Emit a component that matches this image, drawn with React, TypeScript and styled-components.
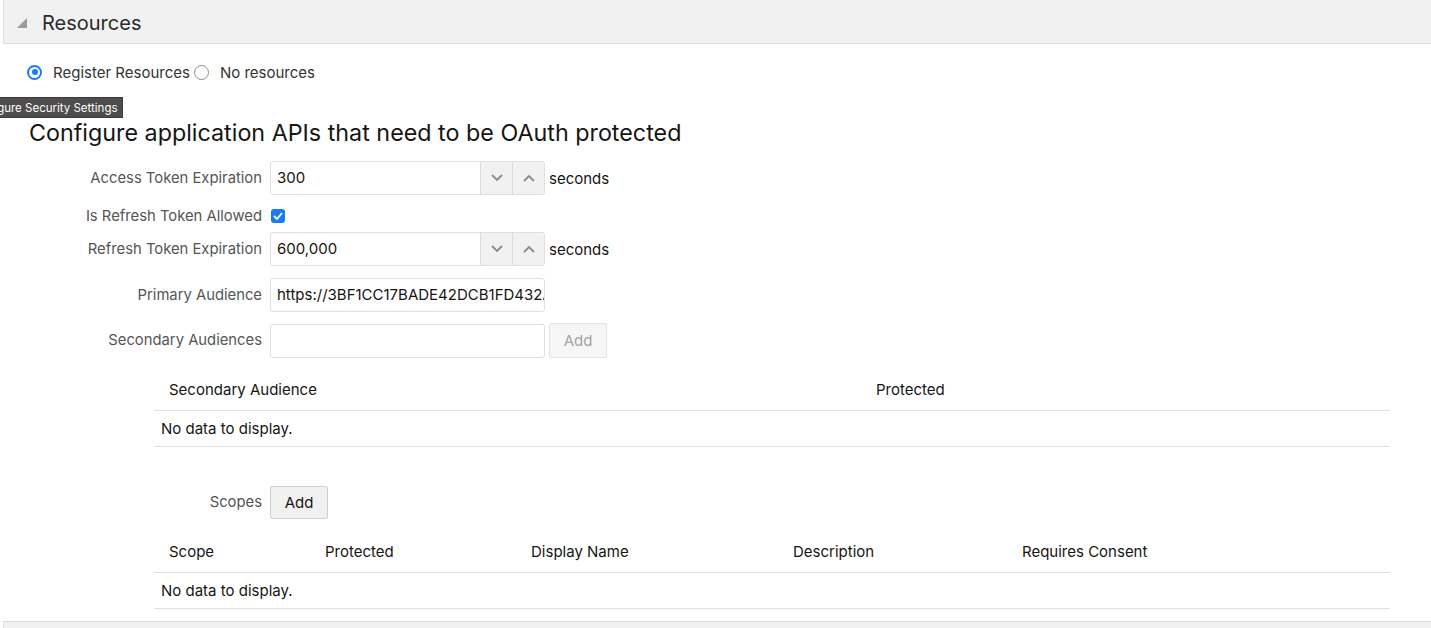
import React from "react";
import styled, { createGlobalStyle } from "styled-components";

const GlobalStyle = createGlobalStyle`
  html, body {
    margin: 0;
    padding: 0;
    background: #fff;
    font-family: Inter, "Liberation Sans", Arial, sans-serif;
    color: #161513;
    overflow: hidden;
  }
`;

const Page = styled.div`
  position: relative;
  width: 1431px;
  height: 628px;
  overflow: hidden;
`;

const SectionBar = styled.div`
  display: flex;
  align-items: center;
  gap: 15px;
  height: 44px;
  margin-left: 3px;
  padding: 3px 0 0 13px;
  background: #f1f1f1;
  border-left: 1px solid #e2e2e2;
  border-bottom: 1px solid #dcdcdc;
  box-sizing: border-box;

  h2 {
    margin: 0;
    font-size: 20px;
    font-weight: 400;
    color: #2b2b2b;
  }
`;

const BottomBar = styled(SectionBar)`
  height: 20px;
  margin-top: 12px;
  border-top: 1px solid #dcdcdc;
  border-bottom: none;
`;

const RadioGroup = styled.div`
  display: flex;
  align-items: center;
  height: 20px;
  margin: 18px 0 0 27px;
  font-size: 15px;
  color: #333;
`;

const RadioOption = styled.label`
  display: flex;
  align-items: center;
  gap: 11px;
  margin-right: 4px;
`;

const RadioDot = styled.span<{ $checked?: boolean }>`
  width: 15px;
  height: 15px;
  box-sizing: border-box;
  border-radius: 50%;
  border: ${(p) => (p.$checked ? "2px solid #1a7cf5" : "1.5px solid #8e8e93")};
  display: flex;
  align-items: center;
  justify-content: center;

  &::after {
    content: "";
    width: 6px;
    height: 6px;
    border-radius: 50%;
    background: ${(p) => (p.$checked ? "#1a7cf5" : "transparent")};
  }
`;

const Tooltip = styled.div`
  position: absolute;
  left: -37px;
  top: 97px;
  height: 19px;
  padding: 0 4px;
  display: flex;
  align-items: center;
  background: #4e4c4d;
  border: 1px solid #3c3c3c;
  color: #fff;
  font-size: 11.5px;
  white-space: nowrap;
`;

const Heading = styled.h1`
  margin: 36px 0 0 29px;
  font-size: 23.3px;
  font-weight: 400;
  line-height: 30px;
  color: #161513;
`;

const Form = styled.div`
  display: flex;
  flex-direction: column;
  margin-top: 13px;
`;

const FieldRow = styled.div<{ $height?: number; $shift?: number }>`
  display: grid;
  grid-template-columns: 262px auto;
  column-gap: 8px;
  align-items: ${(p) => (p.$shift ? "center" : "start")};
  height: ${(p) => p.$height ?? 45}px;
  padding-bottom: ${(p) => p.$shift ?? 0}px;
  box-sizing: border-box;
`;

const Label = styled.label<{ $tight?: boolean }>`
  text-align: right;
  font-size: 14.8px;
  color: #555;
  line-height: ${(p) => (p.$tight ? 20 : 34)}px;
  white-space: nowrap;
`;

const Controls = styled.div`
  display: flex;
  align-items: center;
  gap: 4px;
`;

const InputBox = styled.div`
  display: flex;
  width: 275px;
  height: 34px;
  box-sizing: border-box;
  border: 1px solid #dfdfdf;
  border-radius: 3px;
  overflow: hidden;
  background: #fff;
`;

const InputText = styled.div`
  flex: 1;
  padding-left: 6px;
  font-size: 15px;
  line-height: 32px;
  color: #161513;
  white-space: nowrap;
  overflow: hidden;
`;

const SpinButton = styled.div`
  width: 31px;
  display: flex;
  align-items: center;
  justify-content: center;
  background: #f1f1f1;
  border-left: 1px solid #dcdcdc;
`;

const Unit = styled.span`
  font-size: 15px;
  color: #161513;
`;

const Checkbox = styled.span`
  width: 14px;
  height: 14px;
  margin-left: 1px;
  border-radius: 3px;
  background: #1a7cf5;
  display: flex;
  align-items: center;
  justify-content: center;
`;

const Button = styled.button<{ $disabled?: boolean }>`
  height: ${(p) => (p.$disabled ? 35 : 33)}px;
  width: 58px;
  padding: 0;
  font-family: inherit;
  font-size: 15px;
  border-radius: 2px;
  border: 1px solid ${(p) => (p.$disabled ? "#e3e3e3" : "#cfcfcf")};
  background: ${(p) => (p.$disabled ? "#f6f6f6" : "#f1f1f1")};
  color: ${(p) => (p.$disabled ? "#a3a3a3" : "#161513")};
`;

const Table = styled.div<{ $top: number }>`
  margin: ${(p) => p.$top}px 41px 0 154px;
  font-size: 15px;
  color: #161513;
`;

const TableHead = styled.div<{ $columns: string }>`
  display: grid;
  grid-template-columns: ${(p) => p.$columns};
  align-items: center;
  height: 42px;
  padding-left: 15px;
  border-bottom: 1px solid #e0e0e0;
`;

const EmptyRow = styled.div`
  height: 35px;
  line-height: 35px;
  padding-left: 7px;
  border-bottom: 1px solid #e0e0e0;
`;

const ScopesRow = styled(FieldRow)`
  margin-top: 38px;
  height: auto;
  align-items: center;
`;

const Chevron = ({ up }: { up?: boolean }) => (
  <svg width="12" height="8" viewBox="0 0 12 8">
    <polyline
      points={up ? "1,7 6,2 11,7" : "1,1 6,6 11,1"}
      fill="none"
      stroke="#8a8a8a"
      strokeWidth="1.8"
    />
  </svg>
);

const NumberField = ({ value }: { value: string }) => (
  <Controls>
    <InputBox>
      <InputText>{value}</InputText>
      <SpinButton>
        <Chevron />
      </SpinButton>
      <SpinButton>
        <Chevron up />
      </SpinButton>
    </InputBox>
    <Unit>seconds</Unit>
  </Controls>
);

export default function App() {
  return (
    <Page>
      <GlobalStyle />
      <SectionBar>
        <svg width="10" height="10" viewBox="0 0 10 10">
          <polygon points="10,0 10,10 0,10" fill="#9b9b9b" />
        </svg>
        <h2>Resources</h2>
      </SectionBar>

      <RadioGroup>
        <RadioOption>
          <RadioDot $checked />
          Register Resources
        </RadioOption>
        <RadioOption>
          <RadioDot />
          No resources
        </RadioOption>
      </RadioGroup>

      <Tooltip>Configure Security Settings</Tooltip>

      <Heading>Configure application APIs that need to be OAuth protected</Heading>

      <Form>
        <FieldRow>
          <Label>Access Token Expiration</Label>
          <NumberField value="300" />
        </FieldRow>
        <FieldRow $height={26} $shift={6}>
          <Label $tight>Is Refresh Token Allowed</Label>
          <Checkbox>
            <svg width="10" height="8" viewBox="0 0 10 8">
              <polyline
                points="1,4 4,7 9,1"
                fill="none"
                stroke="#fff"
                strokeWidth="1.8"
              />
            </svg>
          </Checkbox>
        </FieldRow>
        <FieldRow $height={46}>
          <Label>Refresh Token Expiration</Label>
          <NumberField value="600,000" />
        </FieldRow>
        <FieldRow>
          <Label>Primary Audience</Label>
          <Controls>
            <InputBox>
              <InputText>https://3BF1CC17BADE42DCB1FD432A</InputText>
            </InputBox>
          </Controls>
        </FieldRow>
        <FieldRow $height={45}>
          <Label>Secondary Audiences</Label>
          <Controls>
            <InputBox />
            <Button $disabled>Add</Button>
          </Controls>
        </FieldRow>
      </Form>

      <Table $top={0}>
        <TableHead $columns="707px 1fr">
          <span>Secondary Audience</span>
          <span>Protected</span>
        </TableHead>
        <EmptyRow>No data to display.</EmptyRow>
      </Table>

      <ScopesRow>
        <Label>Scopes</Label>
        <Controls>
          <Button>Add</Button>
        </Controls>
      </ScopesRow>

      <Table $top={11}>
        <TableHead $columns="156px 206px 262px 229px 1fr">
          <span>Scope</span>
          <span>Protected</span>
          <span>Display Name</span>
          <span>Description</span>
          <span>Requires Consent</span>
        </TableHead>
        <EmptyRow>No data to display.</EmptyRow>
      </Table>

      <BottomBar />
    </Page>
  );
}
